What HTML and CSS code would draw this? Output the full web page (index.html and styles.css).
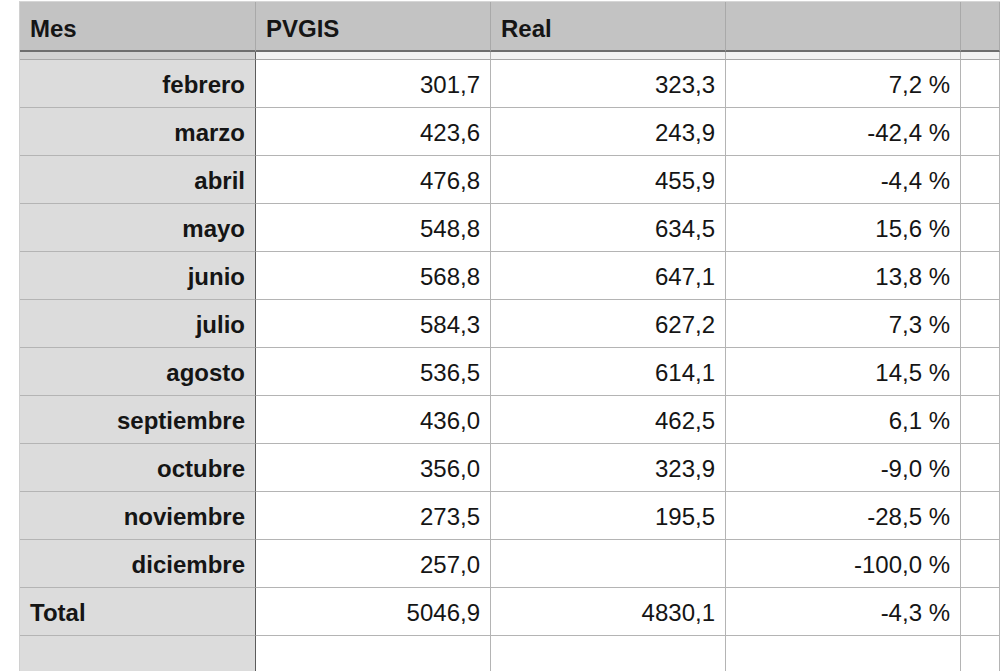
FILE: index.html
```html
<!DOCTYPE html>
<html lang="es">
<head>
<meta charset="utf-8">
<link rel="stylesheet" href="styles.css">
<title>Tabla</title>
</head>
<body>
<div class="sheet">
  <div class="row head">
    <div class="c c1">Mes</div><div class="c">PVGIS</div><div class="c">Real</div><div class="c"></div><div class="c"></div>
  </div>
  <div class="row spacer">
    <div class="c c1"></div><div class="c"></div><div class="c"></div><div class="c"></div><div class="c"></div>
  </div>
  <div class="row"><div class="c c1">febrero</div><div class="c">301,7</div><div class="c">323,3</div><div class="c">7,2 %</div><div class="c"></div></div>
  <div class="row"><div class="c c1">marzo</div><div class="c">423,6</div><div class="c">243,9</div><div class="c">-42,4 %</div><div class="c"></div></div>
  <div class="row"><div class="c c1">abril</div><div class="c">476,8</div><div class="c">455,9</div><div class="c">-4,4 %</div><div class="c"></div></div>
  <div class="row"><div class="c c1">mayo</div><div class="c">548,8</div><div class="c">634,5</div><div class="c">15,6 %</div><div class="c"></div></div>
  <div class="row"><div class="c c1">junio</div><div class="c">568,8</div><div class="c">647,1</div><div class="c">13,8 %</div><div class="c"></div></div>
  <div class="row"><div class="c c1">julio</div><div class="c">584,3</div><div class="c">627,2</div><div class="c">7,3 %</div><div class="c"></div></div>
  <div class="row"><div class="c c1">agosto</div><div class="c">536,5</div><div class="c">614,1</div><div class="c">14,5 %</div><div class="c"></div></div>
  <div class="row"><div class="c c1">septiembre</div><div class="c">436,0</div><div class="c">462,5</div><div class="c">6,1 %</div><div class="c"></div></div>
  <div class="row"><div class="c c1">octubre</div><div class="c">356,0</div><div class="c">323,9</div><div class="c">-9,0 %</div><div class="c"></div></div>
  <div class="row"><div class="c c1">noviembre</div><div class="c">273,5</div><div class="c">195,5</div><div class="c">-28,5 %</div><div class="c"></div></div>
  <div class="row"><div class="c c1">diciembre</div><div class="c">257,0</div><div class="c"></div><div class="c">-100,0 %</div><div class="c"></div></div>
  <div class="row total"><div class="c c1">Total</div><div class="c">5046,9</div><div class="c">4830,1</div><div class="c">-4,3 %</div><div class="c"></div></div>
  <div class="row empty"><div class="c c1"></div><div class="c"></div><div class="c"></div><div class="c"></div><div class="c"></div></div>
</div>
</body>
</html>
```
FILE: styles.css
```css
html, body {
  margin: 0;
  padding: 0;
  background: #ffffff;
  overflow: hidden;
}
body {
  font-family: "Liberation Sans", Arial, sans-serif;
  color: #151515;
}
.sheet {
  margin: 1px 0 0 19px;
  border-top: 1px solid #d6d6d6;
  border-left: 1px solid #d0d0d0;
}
.row {
  display: grid;
  grid-template-columns: 236px 235px 235px 235px 1fr;
  height: 48px;
}
.c {
  box-sizing: border-box;
  border-right: 1px solid #b4b4b4;
  border-bottom: 1px solid #b4b4b4;
  display: flex;
  align-items: center;
  justify-content: flex-end;
  padding: 2px 10px 0 10px;
  font-size: 24px;
  white-space: nowrap;
}
.c1 {
  background: #dcdcdc;
  border-right-color: #5c5c5c;
  font-weight: bold;
}
.head {
  height: 50px;
}
.head .c {
  background: #c3c3c3;
  border-right-color: #a9a9a9;
  border-bottom: 2px solid #6e6e6e;
  justify-content: flex-start;
  font-weight: bold;
  padding-top: 5px;
}
.head .c1 {
  border-right-color: #a9a9a9;
}
.spacer {
  height: 8px;
}
.spacer .c {
  background: #f3f3f3;
  border-bottom-color: #a8a8a8;
}
.spacer .c1 {
  background: #d2d2d2;
}
.total .c1 {
  justify-content: flex-start;
}
.empty {
  height: 60px;
}
.empty .c {
  border-bottom: none;
}
```
